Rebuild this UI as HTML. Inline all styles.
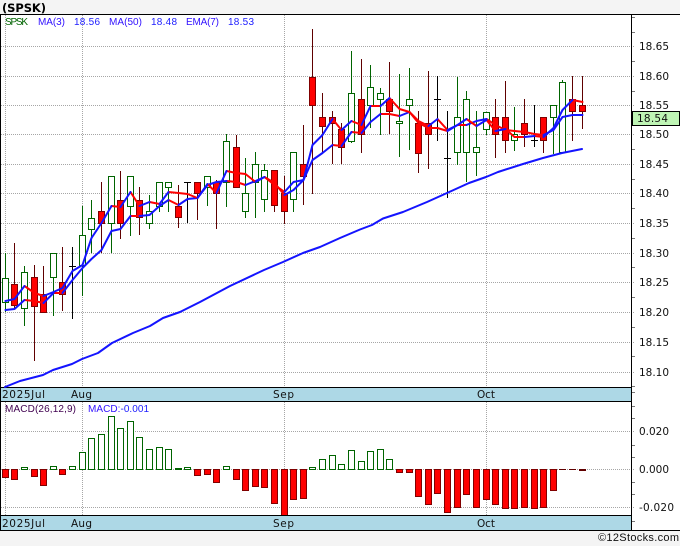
<!DOCTYPE html>
<html lang="en"><head><meta charset="utf-8"><title>SPSK</title>
<style>html,body{margin:0;padding:0;background:#f4f4f4;overflow:hidden}svg{display:block}text{font-family:"DejaVu Sans","Liberation Sans",sans-serif;font-size:10.5px}.l{font-family:"Liberation Sans",sans-serif;font-size:10px}.c{font-family:"Liberation Sans",sans-serif;font-size:11px}</style>
</head><body>
<svg width="680" height="546" viewBox="0 0 680 546" xmlns="http://www.w3.org/2000/svg">
<rect width="680" height="546" fill="#f4f4f4"/>
<rect x="0" y="14" width="680" height="516" fill="#fff"/>
<rect x="1" y="388" width="630" height="13" fill="#add8e6"/>
<rect x="1" y="516" width="630" height="14" fill="#add8e6"/>
<g shape-rendering="crispEdges" fill="none">
<path stroke="#a6a6a6" stroke-dasharray="1 1" d="M1 46.5H634M1 76.5H634M1 105.5H634M1 134.5H634M1 164.5H634M1 193.5H634M1 223.5H634M1 253.5H634M1 282.5H634M1 312.5H634M1 342.5H634M1 372.5H634M1 431.5H634M1 469.5H634M1 507.5H634M5.5 15V387M82.5 15V387M284.5 15V387M486.5 15V387M5.5 402V515M82.5 402V515M284.5 402V515M486.5 402V515"/>
<path stroke="#777" d="M632 17.5h3M632 32.5h3M632 61.5h3M632 91.5h3M632 120.5h3M632 149.5h3M632 179.5h3M632 208.5h3M632 238.5h3M632 267.5h3M632 297.5h3M632 327.5h3M632 356.5h3M632 386.5h3M632 392.5h3M632 406.5h3M632 418.5h3M632 445.5h3M632 457.5h3M632 482.5h3M632 494.5h3M632 521.5h3"/>
<!-- wicks -->
<path stroke="#006400" d="M5.5 253V312M24.5 266V326M53.5 253V316M82.5 206V296M91.5 200V253M111.5 176V253M130.5 176V236M149.5 195V229M159.5 182V212M168.5 182V212M207.5 176V206M226.5 134V207M245.5 158V218M255.5 152V218M264.5 164V212M293.5 152V212M351.5 51V143M370.5 65V128M380.5 88V135M399.5 74V157M409.5 68V150M457.5 77V165M466.5 91V182M476.5 111V176M486.5 112V135M514.5 107V151M553.5 105V154M562.5 80V152"/>
<path stroke="#600000" d="M14.5 243V308M34.5 265V361M43.5 266V312M62.5 247V311M101.5 182V253M120.5 171V239M139.5 187V235M178.5 185V228M197.5 182V220M216.5 180V229M236.5 135V187M274.5 170V212M284.5 176V224M303.5 125V205M312.5 29V194M322.5 93V152M332.5 111V164M341.5 123V164M361.5 59V153M389.5 62V134M418.5 111V173M428.5 71V169M495.5 99V158M505.5 81V153M524.5 99V147M543.5 117V153M572.5 76V141M582.5 76V129"/>
<path stroke="#000" d="M72.5 247V319M69 266.5h7M187.5 182V223M184 182.5h7M437.5 76V141M434 99.5h7M447.5 111V198M444 158.5h7M534.5 105V147M531 140.5h7"/>
<!-- bodies -->
<path stroke="#006400" fill="#fff" d="M2.5 278.5h6v24h-6zM21.5 272.5h6v36h-6zM50.5 253.5h6v24h-6zM79.5 235.5h6v30h-6zM88.5 218.5h6v11h-6zM108.5 176.5h6v47h-6zM127.5 176.5h6v30h-6zM146.5 211.5h6v12h-6zM156.5 182.5h6v24h-6zM165.5 182.5h6v5h-6zM204.5 176.5h6v11h-6zM223.5 141.5h6v41h-6zM242.5 193.5h6v18h-6zM252.5 164.5h6v18h-6zM261.5 170.5h6v29h-6zM290.5 152.5h6v47h-6zM348.5 93.5h6v48h-6zM367.5 87.5h6v18h-6zM377.5 93.5h6v6h-6zM396.5 121.5h6v2h-6zM406.5 99.5h6v6h-6zM454.5 117.5h6v35h-6zM463.5 99.5h6v53h-6zM473.5 147.5h6v5h-6zM483.5 112.5h6v17h-6zM511.5 134.5h6v6h-6zM550.5 105.5h6v12h-6zM559.5 82.5h6v70h-6z"/>
<path stroke="#800000" fill="#f00" d="M11.5 284.5h6v21h-6zM31.5 277.5h6v29h-6zM40.5 294.5h6v18h-6zM59.5 282.5h6v12h-6zM98.5 211.5h6v12h-6zM117.5 200.5h6v23h-6zM136.5 200.5h6v17h-6zM175.5 206.5h6v11h-6zM194.5 182.5h6v11h-6zM213.5 182.5h6v11h-6zM233.5 147.5h6v40h-6zM271.5 170.5h6v35h-6zM281.5 193.5h6v18h-6zM300.5 164.5h6v12h-6zM309.5 77.5h6v28h-6zM319.5 117.5h6v9h-6zM329.5 117.5h6v6h-6zM338.5 129.5h6v18h-6zM358.5 99.5h6v35h-6zM386.5 99.5h6v12h-6zM415.5 123.5h6v30h-6zM425.5 123.5h6v11h-6zM492.5 117.5h6v17h-6zM502.5 117.5h6v23h-6zM521.5 123.5h6v11h-6zM540.5 117.5h6v23h-6zM569.5 99.5h6v12h-6zM579.5 105.5h6v6h-6z"/>
<!-- MACD -->
<path stroke="#006400" fill="#fff" d="M21.5 467.5h6V469.5h-6zM50.5 466.5h6V469.5h-6zM69.5 466.5h6V469.5h-6zM79.5 452.5h6V469.5h-6zM88.5 438.5h6V469.5h-6zM98.5 434.5h6V469.5h-6zM108.5 416.5h6V469.5h-6zM117.5 428.5h6V469.5h-6zM127.5 421.5h6V469.5h-6zM136.5 437.5h6V469.5h-6zM146.5 449.5h6V469.5h-6zM156.5 447.5h6V469.5h-6zM165.5 449.5h6V469.5h-6zM184.5 467.5h6V469.5h-6zM223.5 466.5h6V469.5h-6zM309.5 467.5h6V469.5h-6zM319.5 459.5h6V469.5h-6zM329.5 455.5h6V469.5h-6zM338.5 464.5h6V469.5h-6zM348.5 450.5h6V469.5h-6zM358.5 461.5h6V469.5h-6zM367.5 451.5h6V469.5h-6zM377.5 449.5h6V469.5h-6zM386.5 459.5h6V469.5h-6z"/>
<path stroke="#006400" fill="#006400" d="M175.5 468.5h6v1h-6z"/>
<path stroke="#800000" fill="#f00" d="M2.5 469.5h6V477.5h-6zM11.5 469.5h6V479.5h-6zM31.5 469.5h6V476.5h-6zM40.5 469.5h6V485.5h-6zM59.5 469.5h6V474.5h-6zM194.5 469.5h6V475.5h-6zM204.5 469.5h6V474.5h-6zM213.5 469.5h6V482.5h-6zM233.5 469.5h6V479.5h-6zM242.5 469.5h6V490.5h-6zM252.5 469.5h6V486.5h-6zM261.5 469.5h6V487.5h-6zM271.5 469.5h6V503.5h-6zM281.5 469.5h6V515.5h-6zM290.5 469.5h6V499.5h-6zM300.5 469.5h6V498.5h-6zM396.5 469.5h6V472.5h-6zM406.5 469.5h6V472.5h-6zM415.5 469.5h6V496.5h-6zM425.5 469.5h6V504.5h-6zM434.5 469.5h6V493.5h-6zM444.5 469.5h6V512.5h-6zM454.5 469.5h6V507.5h-6zM463.5 469.5h6V494.5h-6zM473.5 469.5h6V507.5h-6zM483.5 469.5h6V499.5h-6zM492.5 469.5h6V504.5h-6zM502.5 469.5h6V508.5h-6zM511.5 469.5h6V508.5h-6zM521.5 469.5h6V507.5h-6zM531.5 469.5h6V508.5h-6zM540.5 469.5h6V507.5h-6zM550.5 469.5h6V490.5h-6z"/>
<path stroke="#600000" d="M559 469.5h7M569 469.5h7M579 469.5h7M579 470.5h7"/>
<!-- frame -->
<path stroke="#000" d="M0 14.5H680M0.5 14V530M631.5 14V530M0 387.5H632M0 401.5H632M0 515.5H632M0 530.5H680"/>
<rect x="632.5" y="111.5" width="47" height="14" fill="#bff5b5" stroke="#000"/>
</g>
<g fill="none" stroke-width="2" stroke-linejoin="round" stroke-linecap="round">
<path stroke="#f00" d="M24.5 300L34.5 301L43.5 303M53.5 293L62.5 293M130.5 216L139.5 216M168.5 200L178.5 205M226.5 181L236.5 182L245.5 185M264.5 177L274.5 183L284.5 195M332.5 145L341.5 146M351.5 132L361.5 133M380.5 114L389.5 114L399.5 116M409.5 112L418.5 123L428.5 128L437.5 128L447.5 131M457.5 125L466.5 125M486.5 119L495.5 125L505.5 130L514.5 131L524.5 132L534.5 134L543.5 135"/>
<path stroke="#1414ff" d="M5.5 310L14.5 309L24.5 300M43.5 303L53.5 293M62.5 293L72.5 280L82.5 268L91.5 259L101.5 250L111.5 231L120.5 229L130.5 216M139.5 216L149.5 215L159.5 206L168.5 200M178.5 205L187.5 199L197.5 198L207.5 185L216.5 182L226.5 181M245.5 185L255.5 181L264.5 177M284.5 195L293.5 190L303.5 180L312.5 160L322.5 153L332.5 145M341.5 146L351.5 132M361.5 133L370.5 122L380.5 114M399.5 116L409.5 112M447.5 131L457.5 125M466.5 125L476.5 121L486.5 119M543.5 135L553.5 130L562.5 117L572.5 115L582.5 115"/>
<path stroke="#f00" d="M24.5 286L34.5 293L43.5 296M111.5 206L120.5 207M130.5 192L139.5 206M149.5 202L159.5 204M168.5 192L178.5 193L187.5 194L197.5 198M207.5 184L216.5 193M226.5 171L236.5 173L245.5 174L255.5 182M264.5 177L274.5 185L284.5 192M332.5 119L341.5 130M351.5 121L361.5 125M370.5 106L380.5 106M389.5 98L399.5 109L409.5 112L418.5 121L428.5 126M437.5 119L447.5 130M466.5 119L476.5 126M486.5 120L495.5 131M505.5 129L514.5 137L524.5 137M534.5 136L543.5 137M572.5 100L582.5 102"/>
<path stroke="#1414ff" d="M5.5 301L14.5 299L24.5 286M43.5 296L53.5 292L62.5 288L72.5 271L82.5 265L91.5 238L101.5 223L111.5 206M120.5 207L130.5 192M139.5 206L149.5 202M159.5 204L168.5 192M197.5 198L207.5 184M216.5 193L226.5 171M255.5 182L264.5 177M284.5 192L293.5 182L303.5 180L312.5 145L322.5 135L332.5 119M341.5 130L351.5 121M361.5 125L370.5 106M380.5 106L389.5 98M428.5 126L437.5 119M447.5 130L457.5 125L466.5 119M476.5 126L486.5 120M495.5 131L505.5 129M524.5 137L534.5 136M543.5 137L553.5 128L562.5 110L572.5 100"/>
<path stroke="#1414ff" d="M5 387L20 381L43 375L53 370L72 364L82 359L98 353L112 343L133 333L150 326L163 318L180 312L200 302L230 286L264 270L283 262L303 253L320 247L340 238L360 229.5L372 225L383 218.5L403 212L427 202L447 193L469 183L486 177L498 172L523 164L543 158L562 153L582 149"/>
</g>
<text x="2" y="12" textLength="44" style="font-weight:bold;font-size:11.5px" fill="#000">(SPSK)</text>
<g fill="#1c1cff">
<text class="l" x="5" y="25" textLength="23" fill="#006400">SPSK</text>
<text class="l" x="38" y="25" textLength="27" fill="#3010ff">MA(3)</text>
<text class="l" x="74" y="25" textLength="26">18.56</text>
<text class="l" x="109" y="25" textLength="33" fill="#3010ff">MA(50)</text>
<text class="l" x="151" y="25" textLength="26">18.48</text>
<text class="l" x="186" y="25" textLength="33" fill="#3010ff">EMA(7)</text>
<text class="l" x="228" y="25" textLength="26">18.53</text>
<text class="l" x="5" y="412" textLength="71" fill="#400050">MACD(26,12,9)</text>
<text class="l" x="88" y="412" textLength="61"><tspan fill="#3010ff">MACD:</tspan>-0.001</text>
</g>
<g fill="#111">
<text x="639" y="50" textLength="30">18.65</text>
<text x="639" y="80" textLength="30">18.60</text>
<text x="639" y="109" textLength="30">18.55</text>
<text x="639" y="138" textLength="30">18.50</text>
<text x="639" y="168" textLength="30">18.45</text>
<text x="639" y="197" textLength="30">18.40</text>
<text x="639" y="227" textLength="30">18.35</text>
<text x="639" y="257" textLength="30">18.30</text>
<text x="639" y="286" textLength="30">18.25</text>
<text x="639" y="316" textLength="30">18.20</text>
<text x="639" y="346" textLength="30">18.15</text>
<text x="639" y="376" textLength="30">18.10</text>
<text x="637" y="122" textLength="31">18.54</text>
<text x="639" y="435" textLength="30">0.020</text>
<text x="639" y="473" textLength="30">0.000</text>
<text x="639" y="511" textLength="35">-0.020</text>
<text x="2" y="398" textLength="43">2025Jul</text>
<text x="71" y="398" textLength="21">Aug</text>
<text x="273" y="398" textLength="21">Sep</text>
<text x="477" y="398" textLength="18">Oct</text>
<text x="2" y="527" textLength="43">2025Jul</text>
<text x="71" y="527" textLength="21">Aug</text>
<text x="273" y="527" textLength="21">Sep</text>
<text x="477" y="527" textLength="18">Oct</text>
<text class="c" x="598" y="541" textLength="81">©12Stocks.com</text>
</g>
</svg>
</body></html>
